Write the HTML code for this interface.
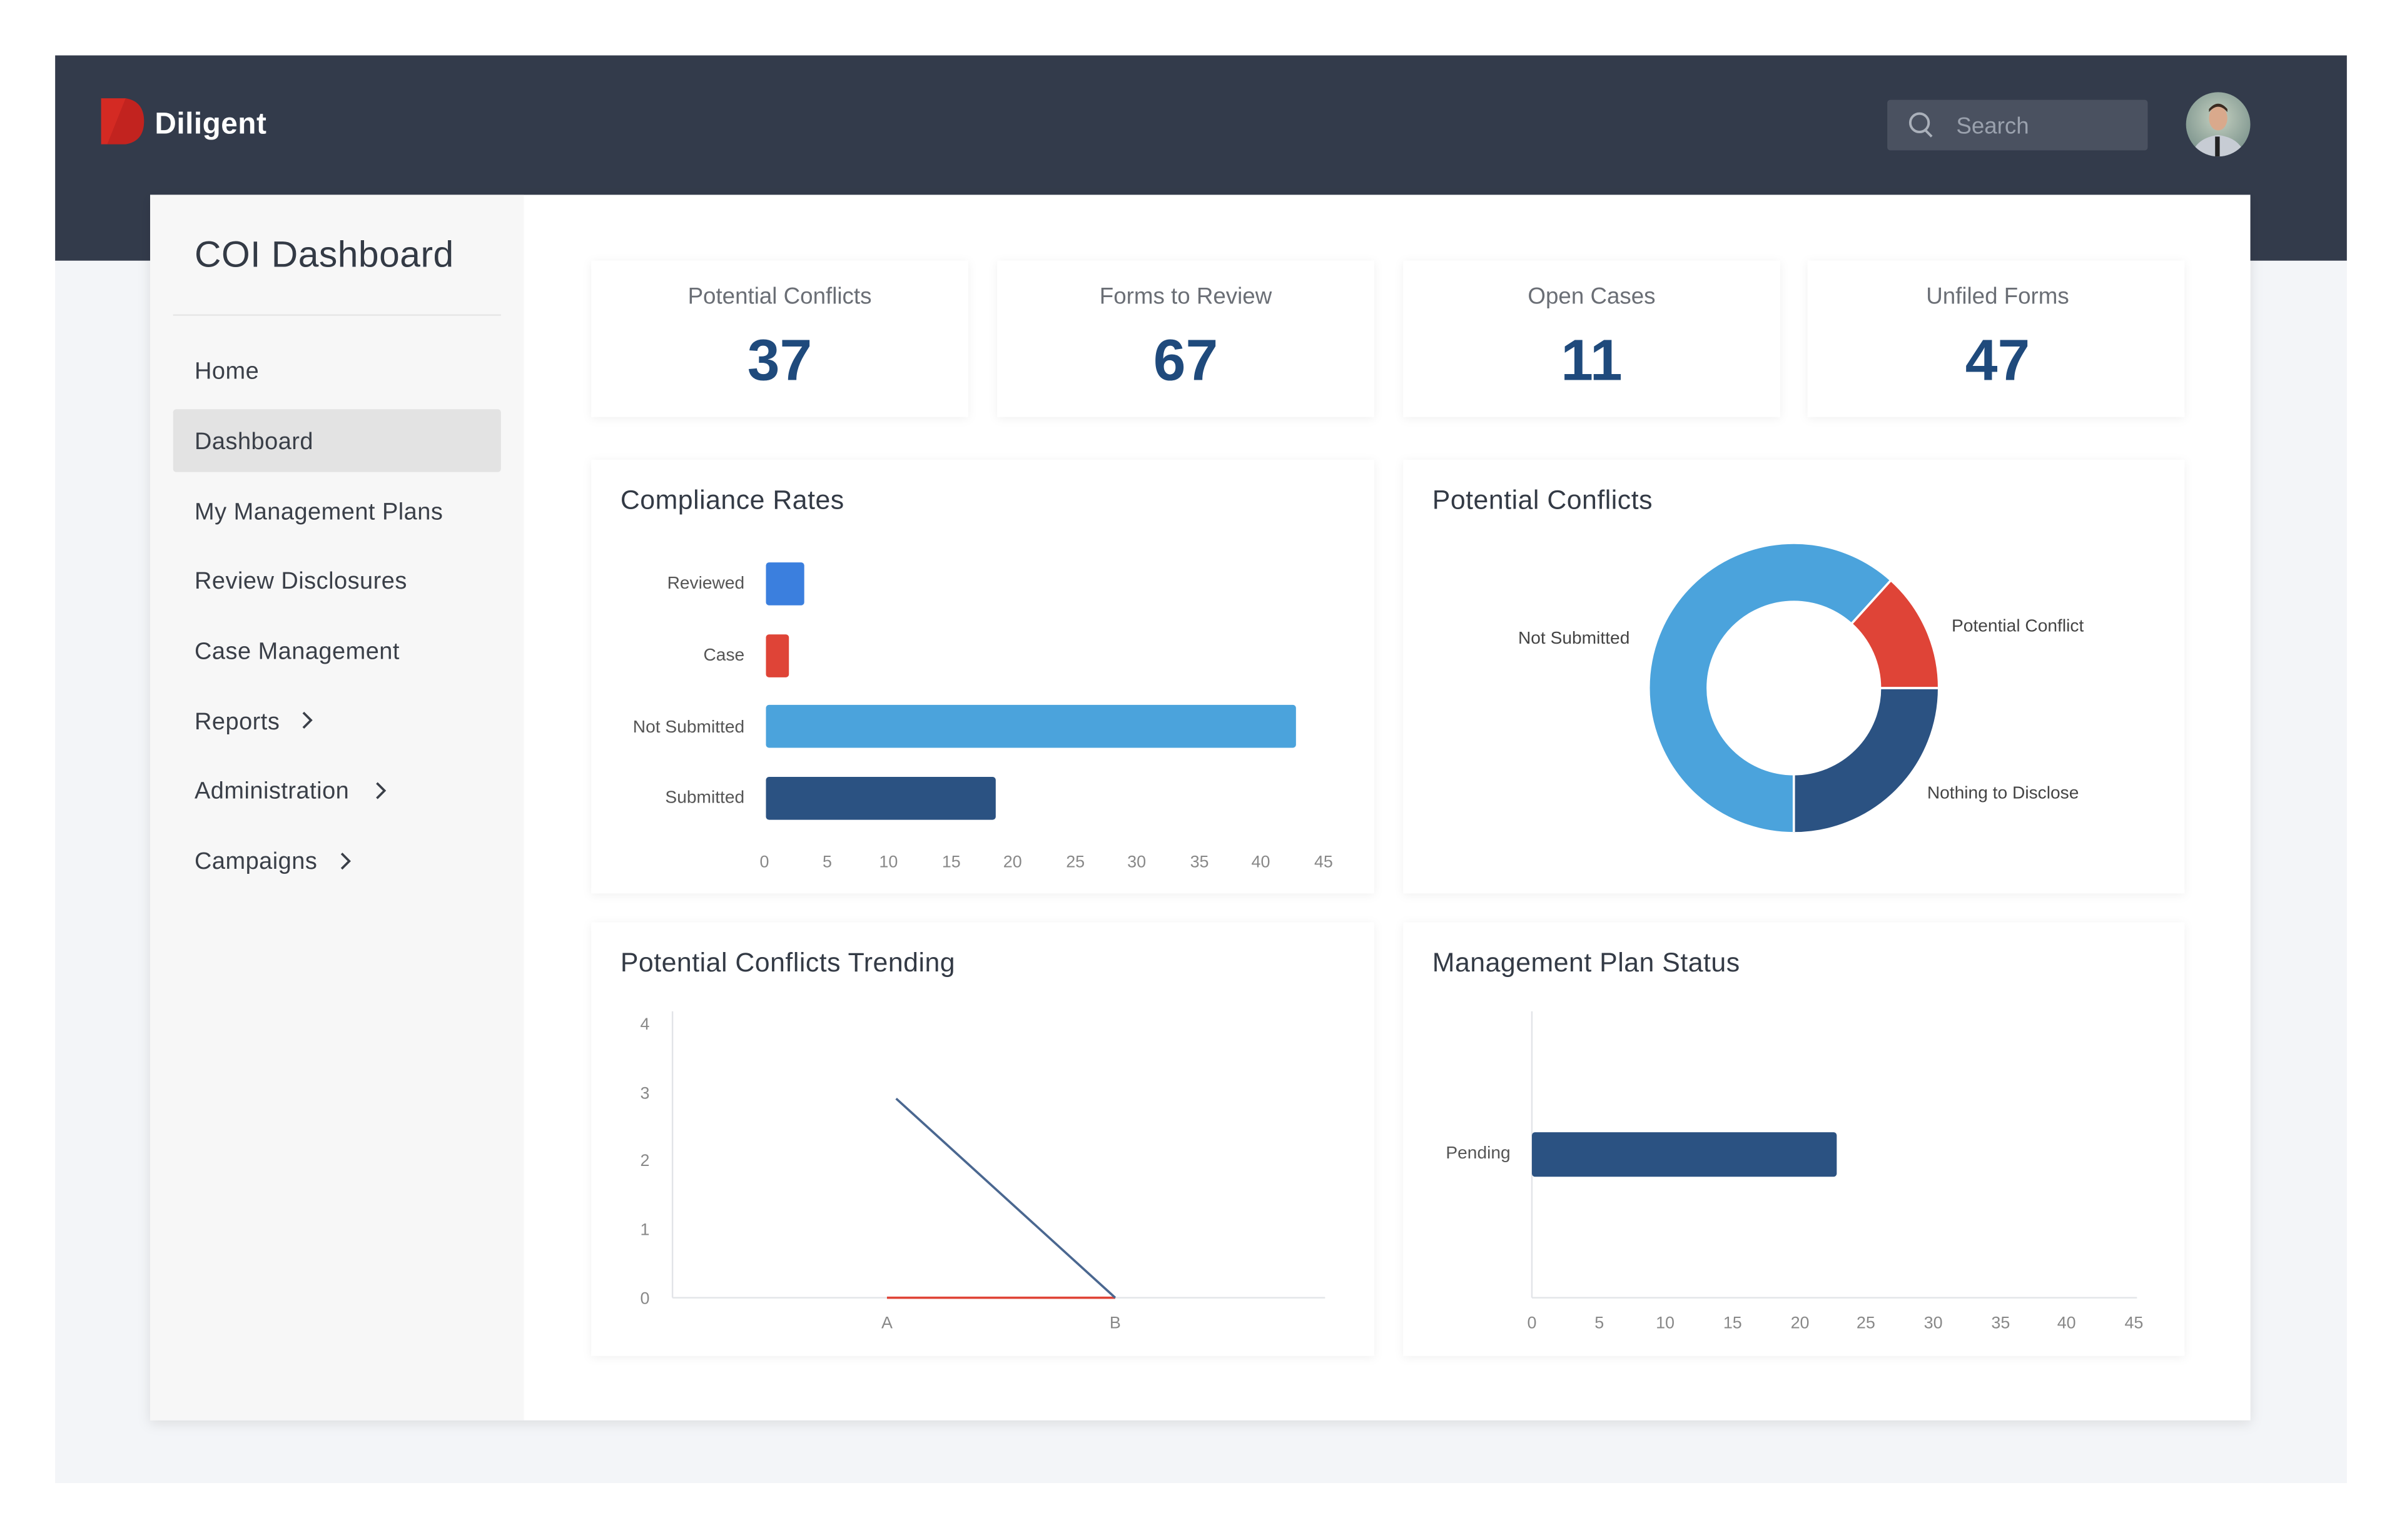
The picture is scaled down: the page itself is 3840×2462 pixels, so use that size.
<!DOCTYPE html>
<html><head><meta charset="utf-8"><style>
html,body{margin:0;padding:0;background:#fff;}
svg{display:block;}
text{font-family:"Liberation Sans",sans-serif;}
</style></head><body>
<svg width="3840" height="2462" viewBox="0 0 1568 1005" xmlns="http://www.w3.org/2000/svg">
<defs>
<filter id="sh" x="-10%" y="-10%" width="120%" height="120%"><feDropShadow dx="0" dy="1" stdDeviation="3" flood-color="#000" flood-opacity="0.06"/></filter>
<filter id="sh2" x="-5%" y="-5%" width="110%" height="110%"><feDropShadow dx="0" dy="2" stdDeviation="4" flood-color="#000" flood-opacity="0.10"/></filter>
<radialGradient id="av" cx="50%" cy="40%" r="60%"><stop offset="0" stop-color="#c4d0c0"/><stop offset="1" stop-color="#7f968f"/></radialGradient>
<clipPath id="avc"><circle cx="1448" cy="81" r="21"/></clipPath>
</defs>
<rect width="1568" height="1005" fill="#fff"/>
<rect x="36" y="170" width="1496" height="798" fill="#f3f5f8"/>
<rect x="36" y="36" width="1496" height="134" fill="#333b4b"/>
<path d="M66 64 L82 64 Q94 66 94 79 Q94 92 82 94 L66 94 Z" fill="#d42a23"/>
<path d="M70 94 L82 64 Q94 66 94 79 Q94 92 82 94 Z" fill="#b51f1c" opacity="0.6"/>
<text x="101" y="87" font-size="19.5" font-weight="bold" fill="#fff" letter-spacing="0.2">Diligent</text>
<rect x="1232" y="65" width="170" height="33" rx="2" fill="#4a5160"/>
<circle cx="1253" cy="80" r="6" fill="none" stroke="#aab0ba" stroke-width="1.6"/>
<line x1="1257" y1="85" x2="1261" y2="89" stroke="#aab0ba" stroke-width="1.6"/>
<text x="1277" y="87" font-size="15" fill="#9aa1ad">Search</text>
<circle cx="1448" cy="81" r="21" fill="url(#av)"/>
<g clip-path="url(#avc)">
<path d="M1430 104 Q1432 90 1448 88 Q1464 90 1466 104 Z" fill="#c7ccd4"/>
<rect x="1446" y="89" width="3" height="16" fill="#222"/>
<ellipse cx="1448" cy="77" rx="6" ry="8" fill="#d9a98c"/>
<path d="M1442 73 Q1448 66 1454 73 L1454 71 Q1448 64 1442 71Z" fill="#3b2a20"/>
</g>
<rect x="98" y="127" width="1371" height="800" fill="#fff" filter="url(#sh2)"/>
<rect x="98" y="127" width="244" height="800" fill="#f7f7f7"/>
<text x="127" y="174" font-size="24" fill="#333a45" letter-spacing="0.2">COI Dashboard</text>
<rect x="113" y="205" width="214" height="1" fill="#e6e6e6"/>
<rect x="113" y="267" width="214" height="41" rx="2" fill="#e3e3e3"/>
<g font-size="15.5" fill="#3a3f48" letter-spacing="0.2">
<text x="127" y="247">Home</text>
<text x="127" y="293">Dashboard</text>
<text x="127" y="339">My Management Plans</text>
<text x="127" y="384">Review Disclosures</text>
<text x="127" y="430">Case Management</text>
<text x="127" y="476">Reports</text>
<text x="127" y="521">Administration</text>
<text x="127" y="567">Campaigns</text>
</g>
<g fill="none" stroke="#3a3f48" stroke-width="1.5">
<path d="M198 465 L203 470 L198 475"/>
<path d="M246 511 L251 516 L246 521"/>
<path d="M223 557 L228 562 L223 567"/>
</g>
<g filter="url(#sh)" fill="#fff">
<rect x="386" y="170" width="246" height="102"/>
<rect x="651" y="170" width="246" height="102"/>
<rect x="916" y="170" width="246" height="102"/>
<rect x="1180" y="170" width="246" height="102"/>
</g>
<g font-size="15" fill="#6a6e75" text-anchor="middle">
<text x="509" y="198">Potential Conflicts</text>
<text x="774" y="198">Forms to Review</text>
<text x="1039" y="198">Open Cases</text>
<text x="1304" y="198">Unfiled Forms</text>
</g>
<g font-size="38" font-weight="bold" fill="#1f4a7c" text-anchor="middle">
<text x="509" y="248">37</text>
<text x="774" y="248">67</text>
<text x="1039" y="248">11</text>
<text x="1304" y="248">47</text>
</g>
<g filter="url(#sh)" fill="#fff">
<rect x="386" y="300" width="511" height="283"/>
<rect x="916" y="300" width="510" height="283"/>
<rect x="386" y="602" width="511" height="283"/>
<rect x="916" y="602" width="510" height="283"/>
</g>
<g font-size="17.5" fill="#333a45" letter-spacing="0.2">
<text x="405" y="332">Compliance Rates</text>
<text x="935" y="332">Potential Conflicts</text>
<text x="405" y="634">Potential Conflicts Trending</text>
<text x="935" y="634">Management Plan Status</text>
</g>
<g font-size="11.5" fill="#555" text-anchor="end">
<text x="486" y="384">Reviewed</text>
<text x="486" y="431">Case</text>
<text x="486" y="478">Not Submitted</text>
<text x="486" y="524">Submitted</text>
</g>
<rect x="500" y="367" width="25" height="28" rx="2" fill="#3b7fde"/>
<rect x="500" y="414" width="15" height="28" rx="2" fill="#df4437"/>
<rect x="500" y="460" width="346" height="28" rx="2" fill="#4ba3dc"/>
<rect x="500" y="507" width="150" height="28" rx="2" fill="#2b5282"/>
<g font-size="11" fill="#888" text-anchor="middle">
<text x="499" y="566">0</text><text x="540" y="566">5</text><text x="580" y="566">10</text><text x="621" y="566">15</text><text x="661" y="566">20</text><text x="702" y="566">25</text><text x="742" y="566">30</text><text x="783" y="566">35</text><text x="823" y="566">40</text><text x="864" y="566">45</text>
</g>
<g fill="none" stroke-width="37">
<circle cx="1171" cy="449" r="75.5" stroke="#2b5282" stroke-dasharray="118.6 500"/>
<circle cx="1171" cy="449" r="75.5" stroke="#4ba3dc" stroke-dasharray="0 118.6 292.6 500"/>
<circle cx="1171" cy="449" r="75.5" stroke="#df4437" stroke-dasharray="0 411.2 63.2 500"/>
</g>
<g stroke="#fff" stroke-width="1.5"><line x1="1208" y1="449" x2="1265" y2="449"/><line x1="1171" y1="486" x2="1171" y2="543"/><line x1="1196" y1="421" x2="1234" y2="379"/></g>
<g font-size="11.5" fill="#444">
<text x="991" y="420">Not Submitted</text>
<text x="1274" y="412">Potential Conflict</text>
<text x="1258" y="521">Nothing to Disclose</text>
</g>
<line x1="439" y1="660" x2="439" y2="847" stroke="#e2e4e8"/>
<line x1="439" y1="847" x2="865" y2="847" stroke="#e2e4e8"/>
<g font-size="11" fill="#888" text-anchor="middle">
<text x="421" y="672">4</text><text x="421" y="717">3</text><text x="421" y="761">2</text><text x="421" y="806">1</text><text x="421" y="851">0</text>
<text x="579" y="867">A</text><text x="728" y="867">B</text>
</g>
<line x1="579" y1="847" x2="728" y2="847" stroke="#df4437" stroke-width="1.5"/>
<line x1="585" y1="717" x2="728" y2="847" stroke="#4a6790" stroke-width="1.5"/>
<line x1="1000" y1="660" x2="1000" y2="847" stroke="#e2e4e8"/>
<line x1="1000" y1="847" x2="1395" y2="847" stroke="#e2e4e8"/>
<text x="986" y="756" font-size="11.5" fill="#555" text-anchor="end">Pending</text>
<rect x="1000" y="739" width="199" height="29" rx="2" fill="#2b5282"/>
<g font-size="11" fill="#888" text-anchor="middle">
<text x="1000" y="867">0</text><text x="1044" y="867">5</text><text x="1087" y="867">10</text><text x="1131" y="867">15</text><text x="1175" y="867">20</text><text x="1218" y="867">25</text><text x="1262" y="867">30</text><text x="1306" y="867">35</text><text x="1349" y="867">40</text><text x="1393" y="867">45</text>
</g>
</svg>
</body></html>
